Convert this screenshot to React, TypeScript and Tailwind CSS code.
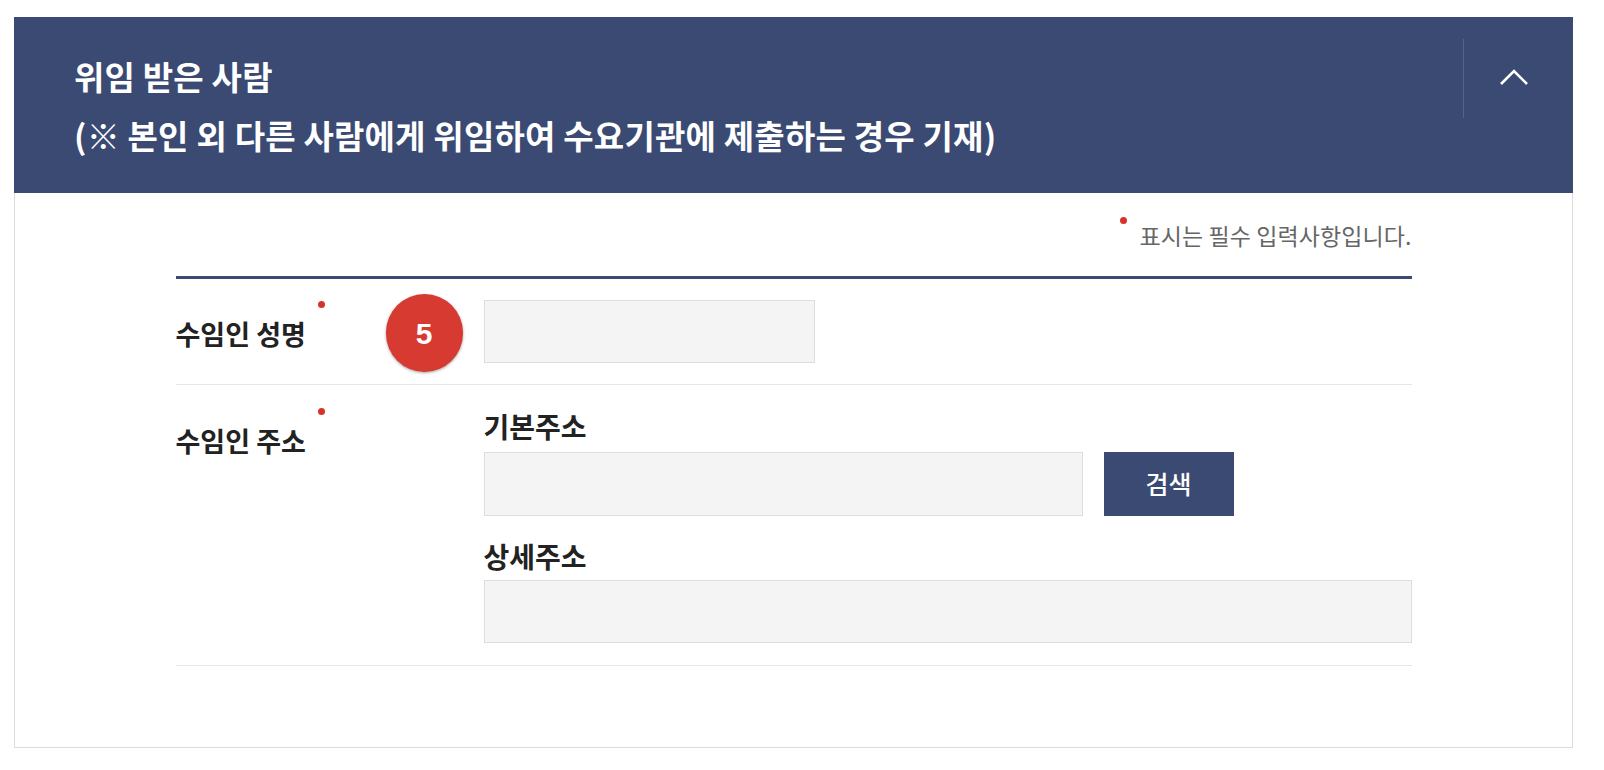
import React from 'react';

const font = { fontFamily: '"Noto Sans CJK KR", "Noto Sans", sans-serif' };

const Dot = ({ className = '' }: { className?: string }) => (
  <span className={`absolute w-[7px] h-[7px] rounded-full bg-[#d8322b] ${className}`} />
);

const App = () => {
  return (
    <div className="w-[1604px] h-[770px] bg-white pt-[17px] pl-[14px]" style={font}>
      <div className="w-[1559px] h-[731px] border border-[#dcdcdc] border-t-0">
        {/* header */}
        <div className="flex items-start justify-between bg-[#3a4a73] h-[176px] -mx-px">
          <h2 className="pl-[60px] pt-[30px] text-white font-bold text-[33px] leading-[59px] tracking-[0.2px]">
            위임 받은 사람
            <br />
            (※ 본인 외 다른 사람에게 위임하여 수요기관에 제출하는 경우 기재)
          </h2>
          <button className="mt-[22px] w-[110px] h-[79px] border-l border-[#56648a] flex items-center justify-center">
            <svg width="30" height="20" viewBox="0 0 30 20" fill="none" className="-mt-[3px] -ml-[10px]">
              <path d="M2 17 L15 4 L28 17" stroke="white" strokeWidth="2.6" />
            </svg>
          </button>
        </div>

        {/* form */}
        <div className="w-[1236px] mx-auto">
          <div className="flex justify-end pt-[26px] pb-[25px]">
            <p className="relative text-[23px] leading-[32px] text-[#666] tracking-[0.1px]">
              <Dot className="-left-[19px] top-[-2px]" />
              표시는 필수 입력사항입니다.
            </p>
          </div>

          <div className="border-t-[3px] border-[#3a4a73]">
            {/* row 1 */}
            <div className="relative flex border-b border-[#e6e6e6] pt-[21px] pb-[21px]">
              <div className="w-[308px] shrink-0 pt-[16px]">
                <span className="relative text-[27px] leading-[36px] font-bold text-[#222]">
                  수임인 성명
                  <Dot className="-right-[19px] -top-[13px]" />
                </span>
              </div>
              <input className="w-[331px] h-[63px] bg-[#f4f4f4] border border-[#dedede] outline-none" />
              <span className="absolute left-[210px] top-[15px] w-[77px] h-[78px] rounded-full bg-[#d63a31] shadow-[0_1px_3px_rgba(0,0,0,0.35)] flex items-center justify-center text-white font-bold text-[30px]" style={{ fontFamily: '"Liberation Sans", Arial, sans-serif' }}>
                5
              </span>
            </div>

            {/* row 2 */}
            <div className="flex border-b border-[#e6e6e6] pt-[23px] pb-[22px]">
              <div className="w-[308px] shrink-0 pt-[15px]">
                <span className="relative text-[27px] leading-[36px] font-bold text-[#222]">
                  수임인 주소
                  <Dot className="-right-[19px] -top-[13px]" />
                </span>
              </div>
              <div className="flex-1">
                <p className="text-[28px] leading-[36px] font-bold text-[#222]">기본주소</p>
                <div className="flex gap-[21px] mt-[8px]">
                  <input className="w-[599px] h-[64px] bg-[#f4f4f4] border border-[#dedede] outline-none" />
                  <button className="w-[130px] h-[64px] bg-[#3a4a73] text-white text-[25px] font-medium">검색</button>
                </div>
                <p className="mt-[22px] text-[28px] leading-[36px] font-bold text-[#222]">상세주소</p>
                <input className="mt-[6px] w-full h-[63px] bg-[#f4f4f4] border border-[#dedede] outline-none" />
              </div>
            </div>
          </div>
        </div>
      </div>
    </div>
  );
};

export default App;
